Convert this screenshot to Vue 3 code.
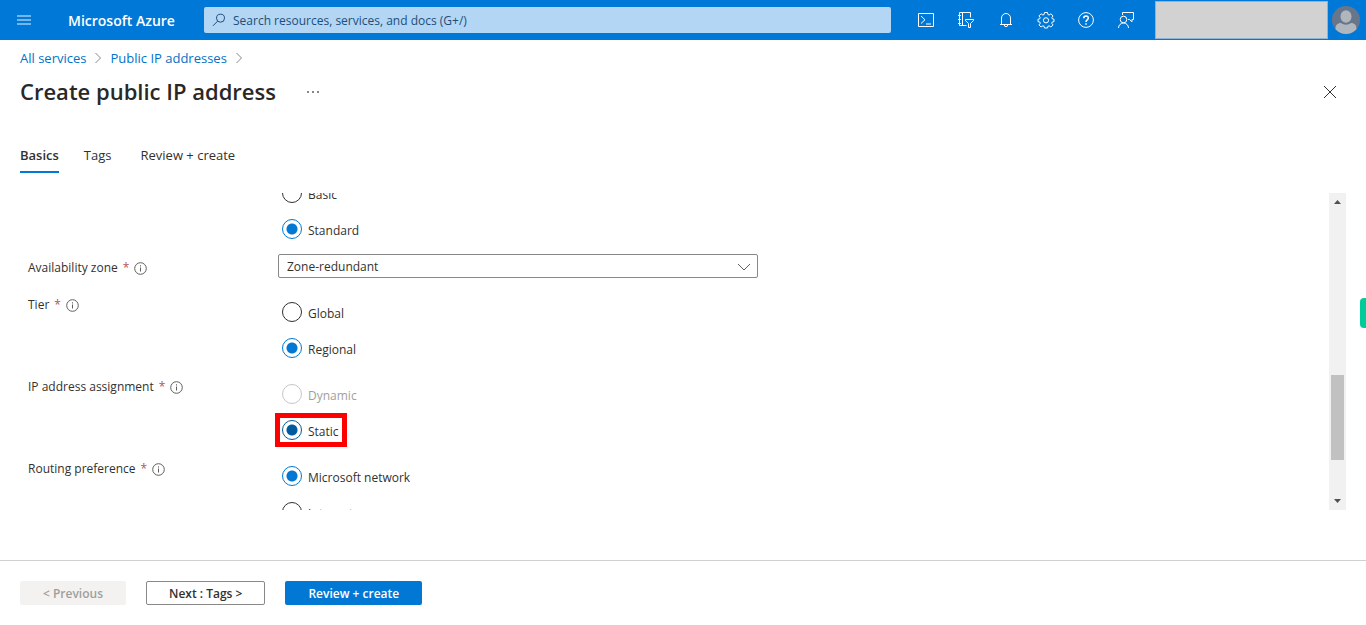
<script setup>
import { ref } from 'vue'

const zone = ref('zr')
const picked = ref({ sku: 'Standard', tier: 'Regional', assignment: 'Static', routing: 'Microsoft network' })
const search = ref('')

const rows = [
  { id: 'sku', label: '', options: [{ name: 'Basic' }, { name: 'Standard' }] },
  { id: 'zone', label: 'Availability zone', select: true },
  { id: 'tier', label: 'Tier', options: [{ name: 'Global' }, { name: 'Regional' }] },
  { id: 'assignment', label: 'IP address assignment', options: [{ name: 'Dynamic', disabled: true }, { name: 'Static', marked: true }] },
  { id: 'routing', label: 'Routing preference', options: [{ name: 'Microsoft network' }, { name: 'Internet' }] }
]
</script>

<template>
  <div class="page">
    <header class="topbar">
      <button class="menu" aria-label="Show portal menu">
        <svg width="14" height="10" viewBox="0 0 14 10"><path d="M0 1h14M0 5h14M0 9h14" /></svg>
      </button>
      <a class="brand" href="#">Microsoft Azure</a>
      <label class="search">
        <svg width="14" height="14" viewBox="0 0 14 14"><circle cx="8.5" cy="5.2" r="4" /><path d="M5.6 8.2 1 12.8" /></svg>
        <input v-model="search" type="text" aria-label="Search" placeholder="Search resources, services, and docs (G+/)" />
      </label>
      <nav class="tools">
        <button aria-label="Cloud Shell">
          <svg width="18" height="18" viewBox="0 0 18 18"><path d="M1.500 2.500h15v13h-15zM4 5l4 3.800L4 12.500M9 13h5" /></svg>
        </button>
        <button aria-label="Directories and subscriptions">
          <svg width="18" height="18" viewBox="0 0 18 18"><path d="M9.500 14.500h-7v-13h11v5M5.500 1.500v13M1 4.500h3M1 8.500h3M1 12.500h3M8.500 8.500h8v1l-3 3v4h-2v-4l-3-3z" /></svg>
        </button>
        <button aria-label="Notifications">
          <svg width="18" height="18" viewBox="0 0 18 18"><path d="M4.500 13.500v-6.500a4.500 4.500 0 0 1 9 0v6.500M3 13.500h12M7.300 14a1.700 1.700 0 0 0 3.400 0" /></svg>
        </button>
        <button aria-label="Settings">
          <svg width="18" height="18" viewBox="0 0 18 18"><path d="M7.500 1.500h3l.4 2 1.200.5 1.800-1.200 2.100 2.100L14.900 6.700l.5 1.200 1.600.3v2.400l-1.800.4-.5 1.200 1.300 1.700-2.100 2.100-1.800-1.200-1.200.5-.4 1.700h-3l-.4-1.700-1.200-.5-1.800 1.200L2 13.900l1.300-1.700-.5-1.200L1 10.600V8.200l1.700-.3.5-1.200L2 4.900l2.100-2.100L5.900 4l1.200-.5z" /><circle cx="9" cy="9.300" r="2.600" /></svg>
        </button>
        <button aria-label="Help">
          <svg width="18" height="18" viewBox="0 0 18 18"><circle cx="9" cy="9" r="7.400" /><path class="bold" d="M6.700 7.200c0-3 4.600-3 4.600-.2 0 1.900-2.300 1.900-2.300 4M9 12.200v1.500" /></svg>
        </button>
        <button aria-label="Feedback">
          <svg width="18" height="18" viewBox="0 0 18 18"><path d="M5.500 4V1.500h11v7h-1.500v2.300L12.500 8.500H11M1.500 17a5 5 0 0 1 10 0" /><circle cx="6.500" cy="8.500" r="3.300" /></svg>
        </button>
      </nav>
      <div class="account"></div>
      <button class="avatar" aria-label="Account">
        <svg width="28" height="28" viewBox="0 0 28 28">
          <circle cx="14" cy="14" r="14" fill="#67768a" />
          <path d="M3.500 23.200c0-4 1.800-6.200 5.500-6.200 3 2.200 7 2.200 10 0 3.700 0 5.500 2.200 5.500 6.200A14 14 0 0 1 3.500 23.200z" fill="#b0b6bd" />
          <ellipse cx="14" cy="10.500" rx="5.500" ry="6.200" fill="#b0b6bd" />
        </svg>
      </button>
    </header>

    <nav class="crumbs" aria-label="Breadcrumb">
      <a href="#">All services</a>
      <svg width="8" height="12" viewBox="0 0 8 12"><path d="M1.500 1 6.500 6l-5 5" /></svg>
      <a href="#">Public IP addresses</a>
      <svg width="8" height="12" viewBox="0 0 8 12"><path d="M1.500 1 6.500 6l-5 5" /></svg>
    </nav>

    <div class="heading">
      <h1>Create public IP address</h1>
      <button class="more" aria-label="More">
        <svg width="12" height="2" viewBox="0 0 12 2"><path d="M0 0h2v2H0zM5 0h2v2H5zM10 0h2v2h-2z" /></svg>
      </button>
      <button class="close" aria-label="Close">
        <svg width="14" height="14" viewBox="0 0 14 14"><path d="m1 1 12 12M13 1 1 13" /></svg>
      </button>
    </div>

    <div class="tabs" role="tablist">
      <button class="tab active" role="tab" aria-selected="true">Basics</button>
      <button class="tab" role="tab">Tags</button>
      <button class="tab" role="tab">Review + create</button>
    </div>

    <main class="body">
      <form class="form" @submit.prevent>
        <div v-for="row in rows" :key="row.id" class="row" :class="{ choice: row.select }">
          <div class="caption">
            <template v-if="row.label">
              <label :id="row.id + '-label'" :for="row.select ? row.id : null">{{ row.label }}</label>
              <span class="star">*</span>
              <svg class="info" width="13" height="13" viewBox="0 0 13 13"><circle cx="6.500" cy="6.500" r="5.800" /><path d="M6.500 5.500v4M6.500 3.300v1.200" /></svg>
            </template>
          </div>
          <div v-if="row.select" class="dropdown">
            <select :id="row.id" v-model="zone">
              <option value="zr">Zone-redundant</option>
            </select>
            <svg width="14" height="8" viewBox="0 0 14 8"><path d="m1 1 6 6 6-6" /></svg>
          </div>
          <div v-else class="radios" role="radiogroup" :aria-labelledby="row.label ? row.id + '-label' : null">
            <label v-for="o in row.options" :key="o.name" class="radio" :class="{ disabled: o.disabled, marked: o.marked }">
              <input v-model="picked[row.id]" type="radio" :name="row.id" :value="o.name" :disabled="o.disabled" />
              <span>{{ o.name }}</span>
            </label>
          </div>
        </div>
      </form>
      <div class="scrollbar" aria-hidden="true">
        <svg width="7" height="4" viewBox="0 0 7 4"><path d="M3.500 0 7 4H0z" /></svg>
        <div class="track"><div class="thumb"></div></div>
        <svg width="7" height="4" viewBox="0 0 7 4"><path d="M3.500 4 0 0h7z" /></svg>
      </div>
    </main>

    <footer class="footer">
      <button class="btn previous" disabled>&lt; Previous</button>
      <button class="btn next">Next : Tags &gt;</button>
      <button class="btn primary">Review + create</button>
    </footer>
    <div class="sidetab"></div>
  </div>
</template>

<style>
body { margin: 0; background: #fff; }
</style>

<style scoped>
.page {
  display: flex;
  flex-direction: column;
  height: 100vh;
  overflow: hidden;
  font-family: "Open Sans", "Noto Sans", sans-serif;
  font-size: 13px;
  line-height: 18px;
  color: #323130;
}
.page * { box-sizing: border-box; }
button, input, select { font: inherit; color: inherit; }
button { padding: 0; border: 0; background: none; }
a { text-decoration: none; }
svg { display: block; flex: none; fill: none; stroke: currentColor; }

.topbar {
  display: flex;
  align-items: center;
  flex: none;
  height: 40px;
  padding-right: 6px;
  background: #0078d7;
  color: #fff;
}
.menu { width: 48px; padding-left: 17px; color: #74b5ea; }
.menu svg { stroke-width: 2; }
.brand { width: 136px; margin-left: 20px; color: #fff; font-size: 14px; line-height: 20px; padding-top: 1px; font-weight: 600; white-space: nowrap; }
.search {
  display: flex;
  align-items: center;
  flex: 1;
  gap: 7px;
  height: 26px;
  margin-right: 15px;
  padding: 0 8px;
  border-radius: 2px;
  background: #b2d6f3;
  color: #1f4e79;
}
.search input { flex: 1; min-width: 0; padding: 2px 0 0; border: 0; outline: 0; background: none; font-size: 12px; }
.search input::placeholder { color: #1f4e79; opacity: 1; }
.tools { display: flex; }
.tools button { display: grid; place-items: center; width: 40px; height: 40px; }
.bold { stroke-width: 1.5; }
.account { width: 173px; height: 38px; margin-left: 9px; border: 1px solid #8db4d8; background: #d2d2d2; }
.avatar { margin-left: 4px; }
.avatar svg { stroke: none; }

.crumbs { display: flex; align-items: center; flex: none; gap: 8px; height: 36px; padding: 0 20px; color: #8a8886; }
.crumbs a { color: #0072c9; }

.heading { display: flex; align-items: center; flex: none; height: 32px; padding: 0 29px 0 20px; }
h1 { margin: 0; font-size: 22px; line-height: 30px; padding-bottom: 2px; font-weight: 600; color: #292827; }
.more { margin-left: 31px; }
.more svg { fill: #8a8886; stroke: none; }
.close { margin-left: auto; color: #323130; }

.tabs { display: flex; flex: none; gap: 25px; margin-top: 31px; padding: 0 20px; }
.tab { height: 34px; border-bottom: 2px solid transparent; }
.tab:last-child { margin-left: 4px; }
.active { border-color: #0078d4; font-weight: 600; }

.body { display: flex; flex: 1; min-height: 0; margin: 20px 20px 50px; }
.form { flex: 1; overflow: hidden; padding-left: 8px; font-size: 12px; }
.row { display: grid; grid-template-columns: 250px minmax(0, 480px); }
.row:first-child { margin-top: -21px; }
.caption { display: flex; gap: 5px; padding-top: 5px; }
.star { color: #b5525c; }
.info { margin-top: 3px; color: #605e5c; }
.choice { padding-bottom: 13px; }
.dropdown { position: relative; }
.dropdown select {
  display: block;
  width: 100%;
  height: 24px;
  padding: 2px 8px 0;
  border: 1px solid #8a8886;
  border-radius: 2px;
  background: #fff;
  appearance: none;
}
.dropdown svg { position: absolute; top: 9px; right: 7px; color: #605e5c; pointer-events: none; }
.radios { display: flex; flex-direction: column; align-items: flex-start; gap: 16px; padding: 11px 4px 15px; }
.radio { position: relative; display: flex; gap: 6px; height: 20px; }
.radio span { line-height: 24px; }
.radio input {
  width: 20px;
  height: 20px;
  margin: 0;
  border: 1px solid #323130;
  border-radius: 50%;
  background: #fff;
  appearance: none;
}
.radio input:checked { border-color: #0078d4; background: radial-gradient(circle, #0078d4 5px, #fff 6px); }
.radio.marked input:checked { border-color: #005a9e; background: radial-gradient(circle, #005a9e 5px, #fff 6px); }
.radio.disabled { color: #a19f9d; }
.radio.disabled input { border-color: #c8c6c4; }
.marked::after { content: ""; position: absolute; inset: -7px -8px -7px -7px; border: 5px solid #f00; }

.scrollbar { display: flex; flex-direction: column; align-items: center; width: 17px; padding: 7px 0; background: #f1f1f1; }
.scrollbar svg { fill: #505050; stroke: none; }
.track { display: flex; flex-direction: column; flex: 1; width: 13px; padding: 4px 0; }
.track::before { content: ""; flex: 167; }
.track::after { content: ""; flex: 35; }
.thumb { flex: 85; background: #c1c1c1; }

.footer { display: flex; flex: none; gap: 20px; padding: 20px; border-top: 1px solid #d2d0ce; }
.btn { height: 24px; padding: 2px 22px 0; border: 1px solid transparent; border-radius: 2px; font-size: 12px; font-weight: 600; }
.previous { background: #f3f2f1; color: #a19f9d; }
.next { border-color: #8a8886; }
.primary { background: #0078d4; color: #fff; }

.sidetab {
  position: fixed;
  top: 298px;
  right: 0;
  width: 6px;
  height: 30px;
  border-radius: 4px 0 0 4px;
  background: #00cc99;
}
</style>
